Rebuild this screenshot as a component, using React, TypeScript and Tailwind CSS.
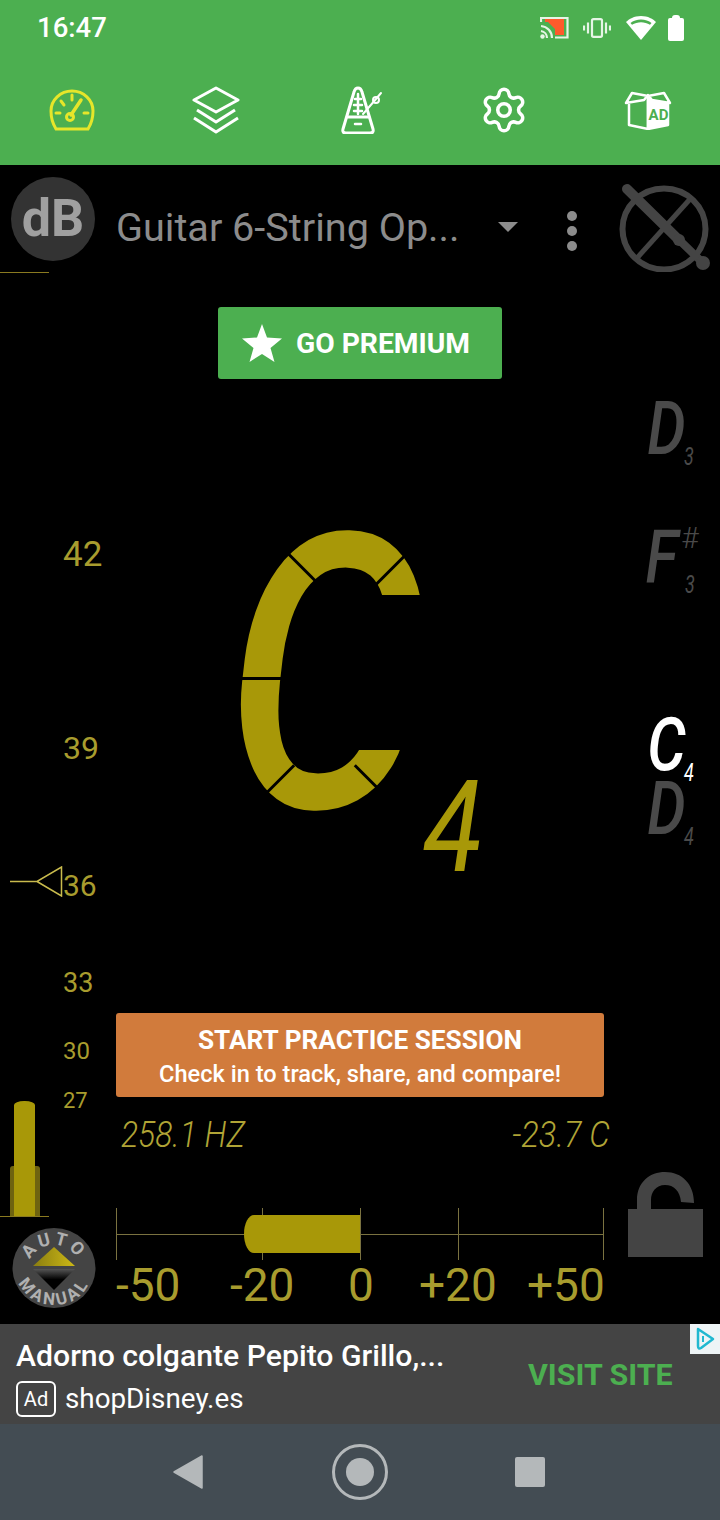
import { Settings } from "lucide-react";

const GaugeIcon = () => (
  <svg width="46" height="42" viewBox="0 0 46 42" fill="none" stroke="#e6e62a" strokeWidth="3" strokeLinecap="round">
    <path d="M7 40 Q2 32 2 22 A21 20 0 0 1 44 22 Q44 32 39 40 Z" />
    <path d="M7 24h4M35 24h4M12 12l3 4M23 6v5" />
    <path d="M22 26 L32 11" strokeWidth="3.5" />
    <circle cx="21" cy="28" r="3.5" />
  </svg>
);

const LayersIcon = () => (
  <svg width="48" height="48" viewBox="0 0 48 48" fill="none" stroke="#fff" strokeWidth="3" strokeLinejoin="round">
    <path d="M24 2 L46 14 L24 26 L2 14 Z" />
    <path d="M5 24 L24 36 L43 24" />
    <path d="M2 32 L24 46 L46 32" />
  </svg>
);

const MetronomeIcon = () => (
  <svg width="42" height="48" viewBox="0 0 42 48" fill="none" stroke="#fff" strokeWidth="3" strokeLinecap="round" strokeLinejoin="round">
    <path d="M17 2 Q14 2 13 6 L2 43 Q1 47 5 47 L29 47 Q33 47 32 43 L21 6 Q20 2 17 2 Z" />
    <path d="M7 31 H27" />
    <path d="M17 8 V28 M14 13 H20 M13 19 H21 M13 25 H21" strokeWidth="2.5" />
    <path d="M14 38 H20" strokeWidth="2.5" />
    <path d="M22 28 L35 13 M35 13 L40 7" strokeWidth="2" />
    <circle cx="35" cy="14" r="3" strokeWidth="2" />
  </svg>
);

const AdBoxIcon = () => (
  <svg width="48" height="40" viewBox="0 0 48 40" fill="none" stroke="#fff" strokeWidth="2.5" strokeLinejoin="round">
    <path d="M2 13 L8 3 L24 6 L40 3 L46 13 L28 10 L24 5 L20 10 Z" />
    <path d="M5 14 V35 L24 39 V8" />
    <path d="M24 39 L44 35 V14 L29 12 L24 6 Z" fill="#fff" />
    <text x="34.5" y="30" textAnchor="middle" fontFamily="Roboto, sans-serif" fontWeight="700" fontSize="15" fill="#4caf50" stroke="none">AD</text>
  </svg>
);

const CastIcon = () => (
  <svg width="29" height="23" viewBox="0 0 29 23" fill="none">
    <path d="M5 3 H24 V19 H15 V13 L8 6 H5 Z" fill="#ff5a2c" />
    <path d="M1 6 V2 H27.5 V21.5 H15" stroke="#e6f5e6" strokeWidth="2.2" />
    <path d="M1 10 A12 12 0 0 1 12 22 M1 15 A7 7 0 0 1 7 22" stroke="#e6f5e6" strokeWidth="2.2" />
    <circle cx="2.5" cy="20.5" r="2.2" fill="#e6f5e6" />
  </svg>
);

const VibrateIcon = () => (
  <svg width="28" height="20" viewBox="0 0 28 20" fill="none" stroke="#e6f5e6" strokeWidth="2.2">
    <rect x="9" y="1.2" width="10" height="17.6" rx="1.5" />
    <path d="M5 4.5 V15.5 M23 4.5 V15.5 M1 7.5 V12.5 M27 7.5 V12.5" />
  </svg>
);

const WifiIcon = () => (
  <svg width="32" height="26" viewBox="0 0 32 26" fill="none">
    <path d="M16 1 C9 1 4 4 1 7 L16 25 L31 7 C28 4 23 1 16 1 Z" fill="#fff" />
    <path d="M5.5 8 C8 5.8 12 4.6 16 4.6 C20 4.6 24 5.8 26.5 8 L25 9.8 C22.5 8 19 7.2 16 7.2 C13 7.2 9.5 8 7 9.8 Z" fill="#4caf50" />
  </svg>
);

const GuitarOffIcon = () => (
  <svg width="92" height="88" viewBox="0 0 92 88" fill="none" stroke="#444" strokeLinecap="round">
    <ellipse cx="45" cy="45" rx="41.5" ry="40.5" strokeWidth="6" />
    <path d="M72 14 L18 74" strokeWidth="5" />
    <path d="M8 5 L60 56" strokeWidth="10" />
    <path d="M54 50 L84 79" strokeWidth="8" />
    <circle cx="84" cy="79" r="7" fill="#444" stroke="none" />
    <circle cx="60" cy="56" r="6" fill="#444" stroke="none" />
  </svg>
);

const AutoManualIcon = () => (
  <svg width="84" height="80" viewBox="0 0 84 80" className="overflow-visible">
    <defs>
      <linearGradient id="upper" x1="0" y1="0" x2="1" y2="0">
        <stop offset="0" stopColor="#8a7d10" />
        <stop offset="1" stopColor="#cdb916" />
      </linearGradient>
      <linearGradient id="lower" x1="0" y1="0" x2="0" y2="1">
        <stop offset="0" stopColor="#555" />
        <stop offset="0.5" stopColor="#000" />
      </linearGradient>
      <path id="autoArc" d="M16 42 A26 25 0 0 1 68 42" />
      <path id="manualArc" d="M4 42 A38 35 0 0 0 80 42" />
    </defs>
    <ellipse cx="42" cy="40" rx="41.5" ry="40" fill="#444" />
    <path d="M21 38 L42 19 L63 38 Z" fill="url(#upper)" />
    <path d="M21 41 H63 L42 62 Z" fill="url(#lower)" />
    <text fontFamily="Roboto, sans-serif" fontWeight="700" fontSize="18" fill="#b0b0b0" letterSpacing="3">
      <textPath href="#autoArc" startOffset="50%" textAnchor="middle">AUTO</textPath>
    </text>
    <text fontFamily="Roboto, sans-serif" fontWeight="700" fontSize="17" fill="#b0b0b0" letterSpacing="3">
      <textPath href="#manualArc" startOffset="50%" textAnchor="middle">MANUAL</textPath>
    </text>
  </svg>
);

const LockIcon = () => (
  <svg width="76" height="85" viewBox="0 0 76 85" fill="#444">
    <path d="M9 40 V28 C9 10 22 0 37 0 C54 0 66 12 66 31 L53 30 C52 19 46 13 37 13 C28 13 23 20 23 28 V40 Z" />
    <rect x="0" y="37" width="75" height="48" />
  </svg>
);

const ScaleLabel = ({ value, size, className }: { value: string; size: string; className: string }) => (
  <div className={`ml-[63px] flex items-center text-[#a89c2e] ${size} ${className}`}>{value}</div>
);

interface INoteProps {
  note: string;
  octave: string;
  color: string;
  className?: string;
}
const SmallNote = ({ note, octave, color, className }: INoteProps) => (
  <div className={`flex ml-[43px] ${color} ${className ?? ""}`}>
    <div className="w-[38px] h-[54px] flex items-center justify-center">
      <span className="italic font-medium text-[74px] leading-[54px] scale-x-[0.82]">{note}</span>
    </div>
    <div className="w-[14px] h-[18px] mt-[46px] -ml-[3px] flex items-center justify-center">
      <span className="text-[25px] italic leading-[18px] scale-x-[0.72]">{octave}</span>
    </div>
  </div>
);

const App = () => {
  return (
    <div className="w-[720px] h-[1520px] overflow-hidden flex flex-col bg-black font-['Roboto',sans-serif]">
      {/* status bar + toolbar */}
      <header className="h-[165px] bg-[#4caf50] flex flex-col">
        <div className="h-[55px] flex items-center pl-[37px] pr-[36px]">
          <span className="text-white text-[27.5px] font-medium leading-none flex-1">16:47</span>
          <div className="flex items-center">
            <CastIcon />
            <div className="ml-[14px]"><VibrateIcon /></div>
            <div className="ml-[14px]"><WifiIcon /></div>
            <div className="ml-[11px] w-[16px] h-[26px] flex flex-col items-center">
              <div className="w-[8px] h-[3px] bg-white rounded-t-sm" />
              <div className="w-[16px] h-[23px] bg-white rounded-[2px]" />
            </div>
          </div>
        </div>
        <nav className="grid grid-cols-5 h-[110px] text-white">
          <div className="flex items-center justify-center"><GaugeIcon /></div>
          <div className="flex items-center justify-center"><LayersIcon /></div>
          <div className="flex items-center justify-center pl-[4px]"><MetronomeIcon /></div>
          <div className="flex items-center justify-center">
            <Settings size={50} strokeWidth={1.7} />
          </div>
          <div className="flex items-center justify-center"><AdBoxIcon /></div>
        </nav>
      </header>

      {/* preset row */}
      <div className="h-[107px] flex items-start">
        <div className="ml-[11px] mt-[12px] w-[84px] h-[84px] rounded-full bg-[#333] flex items-center justify-center text-[#a0a0a0] text-[52px] font-bold leading-none">
          dB
        </div>
        <div className="ml-[21px] mt-[39px] w-[381px] text-[39.6px] leading-[48px] text-[#8c8c8c] whitespace-nowrap">
          Guitar 6-String Op...
        </div>
        <svg width="20" height="10" viewBox="0 0 20 10" className="mt-[57px] ml-[1px]" fill="#8c8c8c">
          <path d="M0 0 H20 L10 10 Z" />
        </svg>
        <div className="ml-[49px] mt-[46px] flex flex-col gap-[5px]">
          <div className="w-[10px] h-[10px] rounded-full bg-[#8c8c8c]" />
          <div className="w-[10px] h-[10px] rounded-full bg-[#8c8c8c]" />
          <div className="w-[10px] h-[10px] rounded-full bg-[#8c8c8c]" />
        </div>
        <div className="ml-[42px] mt-[19px]"><GuitarOffIcon /></div>
      </div>

      <div className="flex-1 flex">
        {/* dB scale */}
        <div className="w-[116px] flex flex-col">
          <div className="w-[49px] h-px bg-[#8a7a20]" />
          <ScaleLabel value="42" size="text-[35px] h-[40px]" className="mt-[262px]" />
          <ScaleLabel value="39" size="text-[32px] h-[40px]" className="mt-[153px]" />
          <div className="mt-[93px] h-[40px] flex items-center text-[#a89c2e] text-[30px]">
            <svg width="53" height="31" viewBox="0 0 53 31" fill="none" stroke="#c9bb4d" strokeWidth="1.5" className="ml-[10px] shrink-0">
              <path d="M0 15.5 H27 L51.5 1 V30 L27 15.5" />
            </svg>
            <span className="mt-[8px]">36</span>
          </div>
          <ScaleLabel value="33" size="text-[27px] h-[32px]" className="mt-[66px]" />
          <ScaleLabel value="30" size="text-[24px] h-[28px]" className="mt-[38px]" />
          <div className="mt-[23px] flex">
            <div className="w-[49px] mt-[13px] flex flex-col items-center">
              <div className="w-[21px] h-[65px] bg-[#a89808] rounded-[10px_10px_0_0/4px_4px_0_0]" />
              <div className="w-[30px] h-[50px] bg-[#6e6310] rounded-t-[3px] flex justify-center">
                <div className="w-[21px] h-full bg-[#a89808]" />
              </div>
              <div className="w-[49px] h-px bg-[#8a7a20]" />
            </div>
            <div className="ml-[14px] h-[24px] flex items-center text-[#a89c2e] text-[22px]">27</div>
          </div>
          <div className="ml-[12px] mt-[11px]"><AutoManualIcon /></div>
        </div>

        {/* tuner */}
        <div className="w-[488px] flex flex-col">
          <button className="self-center mt-[35px] w-[284px] h-[72px] bg-[#4caf50] rounded-[3px] flex items-center text-white">
            <svg width="40" height="38" viewBox="0 0 40 38" className="ml-[24px]" fill="#fff">
              <path d="M20 0 L25 13.5 L40 14.5 L28.5 24 L32.5 38 L20 30 L7.5 38 L11.5 24 L0 14.5 L15 13.5 Z" />
            </svg>
            <span className="ml-[14px] mt-[2px] text-[28.2px] font-bold leading-none whitespace-nowrap">GO PREMIUM</span>
          </button>

          <div className="h-[634px] flex items-start text-[#a89808]">
            <div className="relative ml-[115px] mt-[156px] w-[187px] h-[283px] flex items-center justify-center">
              <span className="italic font-medium text-[384px] leading-[283px] scale-x-[0.82]">C</span>
              {/* gaps between the display segments, and the shorter ends of the C */}
              <div className="absolute left-[0px] top-[142px] w-[70px] h-[3px] bg-black" />
              <div className="absolute left-[38px] top-[28px] w-[60px] h-[3px] bg-black rotate-45" />
              <div className="absolute left-[135px] top-[28px] w-[60px] h-[3px] bg-black -rotate-45" />
              <div className="absolute left-[12px] top-[250px] w-[60px] h-[3px] bg-black -rotate-45" />
              <div className="absolute left-[115px] top-[250px] w-[60px] h-[3px] bg-black rotate-45" />
              <div className="absolute left-[135px] top-[60px] w-[65px] h-[40px] bg-black" />
              <div className="absolute left-[125px] top-[165px] w-[65px] h-[50px] bg-black" />
            </div>
            <div className="mt-[402px] ml-[6px] w-[57px] h-[92px] flex items-center justify-center">
              <span className="italic text-[128px] leading-[92px] scale-x-[0.85]">4</span>
            </div>
          </div>

          <button className="h-[84px] w-full pt-[3px] bg-[#d17b3c] rounded-[3px] flex flex-col items-center justify-center text-white">
            <span className="text-[26.2px] font-bold leading-[34px]">START PRACTICE SESSION</span>
            <span className="text-[23.6px] font-medium leading-[34px]">Check in to track, share, and compare!</span>
          </button>

          <div className="mt-[22px] h-[28px] flex justify-between pl-[5px] -mr-[6px] text-[#b0a436] italic font-light text-[37px] leading-none whitespace-nowrap">
            <span className="origin-left scale-x-[0.86] -mt-[3px]">258.1 HZ</span>
            <span className="origin-right scale-x-[0.88] -mt-[3px]">-23.7 C</span>
          </div>

          {/* cents meter */}
          <div className="relative mt-[61px] h-[52px] flex">
            <div className="w-[146px] border-l border-[#7a7240] flex items-center"><div className="w-full h-px bg-[#7a7240]" /></div>
            <div className="w-[98px] border-l border-[#7a7240] flex items-center"><div className="w-full h-px bg-[#7a7240]" /></div>
            <div className="w-[98px] border-l border-[#7a7240] flex items-center"><div className="w-full h-px bg-[#7a7240]" /></div>
            <div className="w-[146px] border-x border-[#7a7240] flex items-center"><div className="w-full h-px bg-[#7a7240]" /></div>
            <div className="absolute left-[128px] top-[7px] w-[116px] h-[38px] bg-[#a89808] rounded-[10px_0_0_10px/19px_0_0_19px]" />
          </div>
          <div className="h-[50px] flex items-center text-[#a89c2e] text-[46px] leading-none whitespace-nowrap">
            <span className="w-[64px]">-50</span>
            <span className="ml-[50px] w-[64px]">-20</span>
            <span className="ml-[54px] w-[24px]">0</span>
            <span className="ml-[47px] w-[76px]">+20</span>
            <span className="ml-[32px] w-[76px]">+50</span>
          </div>
        </div>

        {/* next notes + lock */}
        <div className="w-[116px] flex flex-col">
          <SmallNote note="D" octave="3" color="text-[#4a4a4a]" className="mt-[130px] h-[65px]" />
          <div className="flex ml-[39px] mt-[58px] h-[70px] text-[#4a4a4a]">
            <div className="w-[38px] h-[54px] mt-[5px] flex items-center justify-center">
              <span className="italic font-medium text-[74px] leading-[54px] scale-x-[0.82]">F</span>
            </div>
            <div className="w-[18px] flex flex-col items-center">
              <span className="text-[30px] font-light leading-[26px]">#</span>
              <span className="mt-[24px] text-[25px] italic leading-[20px] scale-x-[0.72]">3</span>
            </div>
          </div>
          <SmallNote note="C" octave="4" color="text-white" className="mt-[123px] h-[64px]" />
          <SmallNote note="D" octave="4" color="text-[#4a4a4a]" className="h-[64px]" />
          <div className="ml-[24px] mt-[326px]"><LockIcon /></div>
        </div>
      </div>

      {/* ad banner */}
      <div className="h-[100px] bg-[#444] flex">
        <div className="flex-1 pl-[16px] flex flex-col">
          <div className="mt-[13px] text-white text-[30.2px] font-medium leading-[38px] whitespace-nowrap">
            Adorno colgante Pepito Grillo,...
          </div>
          <div className="mt-[6px] flex items-center text-white">
            <div className="w-[40px] h-[36px] border-2 border-white rounded-[6px] flex items-center justify-center text-[20px] leading-none">
              Ad
            </div>
            <span className="ml-[9px] text-[27.8px] leading-none">shopDisney.es</span>
          </div>
        </div>
        <div className="w-[162px] mt-[31px] text-[#4caf50] text-[30.4px] font-bold leading-[40px]">VISIT SITE</div>
        <div className="w-[30px] h-[30px] bg-[#eef4f6] flex items-center justify-center shrink-0">
          <svg width="20" height="24" viewBox="0 0 20 24" fill="none" stroke="#21b8d0" strokeWidth="2.5" strokeLinejoin="round">
            <path d="M3 2 L18 12 L6 21 C4 22 3 21 3 19 Z" />
            <path d="M8 9 V15" strokeWidth="2" />
          </svg>
        </div>
      </div>

      {/* android nav */}
      <div className="h-[96px] bg-[#434c53] flex items-center justify-center">
        <svg width="30" height="34" viewBox="0 0 30 34" fill="#b4b8ba" className="mr-[129px] -ml-[2px]">
          <path d="M29 1 V33 L1 17 Z" strokeLinejoin="round" stroke="#b4b8ba" strokeWidth="1.5" />
        </svg>
        <div className="w-[56px] h-[56px] rounded-full border-[3px] border-[#b4b8ba] flex items-center justify-center">
          <div className="w-[28px] h-[28px] rounded-full bg-[#b4b8ba]" />
        </div>
        <div className="ml-[127px] w-[30px] h-[30px] bg-[#b4b8ba] rounded-[2px]" />
      </div>
    </div>
  );
};

export default App;
